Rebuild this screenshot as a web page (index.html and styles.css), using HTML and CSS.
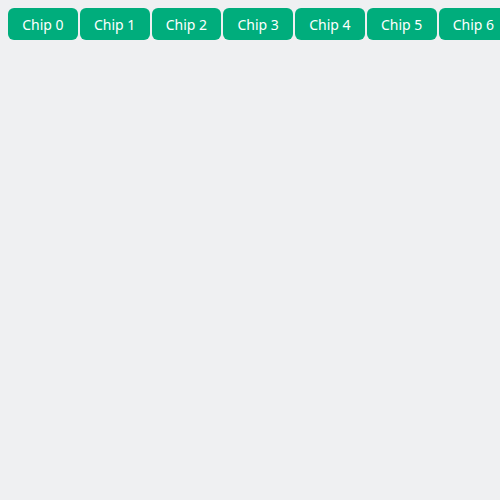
FILE: index.html
```html
<!DOCTYPE html>
<html>
<head>
<meta charset="utf-8">
<link rel="stylesheet" href="styles.css">
</head>
<body>
<div class="chips">
  <span class="chip">Chip 0</span>
  <span class="chip">Chip 1</span>
  <span class="chip">Chip 2</span>
  <span class="chip">Chip 3</span>
  <span class="chip">Chip 4</span>
  <span class="chip">Chip 5</span>
  <span class="chip">Chip 6</span>
  <span class="chip">Chip 7</span>
</div>
</body>
</html>
```
FILE: styles.css
```css
html, body {
  margin: 0;
  background: #eff0f2;
}
body {
  padding: 8px;
  font-family: "Noto Sans", sans-serif;
}
.chips {
  display: flex;
  gap: 2px;
}
.chip {
  flex: none;
  display: flex;
  align-items: center;
  height: 32px;
  padding: 0 14.2px;
  background: #00ad7c;
  color: #ffffff;
  font-size: 14px;
  border-radius: 6px;
}
```
